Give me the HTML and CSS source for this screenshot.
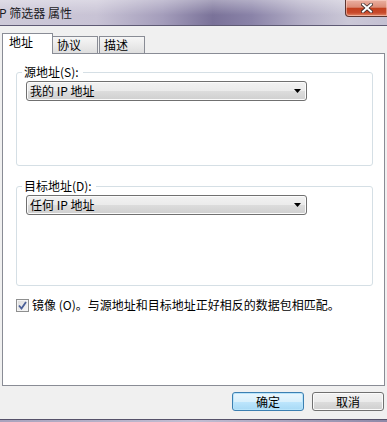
FILE: index.html
```html
<!DOCTYPE html>
<html lang="zh-CN">
<head>
    <meta charset="UTF-8">
    <meta name="viewport" content="width=device-width, initial-scale=1.0">
    <title>IP 筛选器 属性</title>
    <link rel="stylesheet" href="styles.css">
</head>
<body>
    <div class="window">
        <div class="titlebar">
            <div class="title">P 筛选器 属性</div>
            <div class="close">
                <svg width="12" height="10" viewBox="0 0 12 10">
                    <path d="M2 1.5 L10 8.5 M10 1.5 L2 8.5" stroke="#3a2a2a" stroke-width="3.6" stroke-linecap="square"/>
                    <path d="M2 1.5 L10 8.5 M10 1.5 L2 8.5" stroke="#ffffff" stroke-width="2" stroke-linecap="square"/>
                </svg>
            </div>
        </div>

        <div class="content">
            <div class="tabs">
                <div class="tab active">地址</div>
                <div class="tab">协议</div>
                <div class="tab">描述</div>
            </div>

            <div class="panel">
                <fieldset class="group">
                    <legend>源地址(S):</legend>
                    <div class="combo">
                        <span>我的 IP 地址</span>
                        <svg class="arrow" width="7" height="4" viewBox="0 0 7 4"><path d="M0 0 H7 L3.5 4 Z" fill="#000"/></svg>
                    </div>
                </fieldset>

                <fieldset class="group group-dest">
                    <legend>目标地址(D):</legend>
                    <div class="combo">
                        <span>任何 IP 地址</span>
                        <svg class="arrow" width="7" height="4" viewBox="0 0 7 4"><path d="M0 0 H7 L3.5 4 Z" fill="#000"/></svg>
                    </div>
                </fieldset>

                <label class="check">
                    <span class="box">
                        <svg width="9" height="9" viewBox="0 0 9 9"><path d="M1 4.5 L3.5 7.5 L8 1" fill="none" stroke="#4a5f97" stroke-width="1.8"/></svg>
                    </span>
                    镜像 (O)。与源地址和目标地址正好相反的数据包相匹配。
                </label>
            </div>

            <div class="buttons">
                <button class="btn default">确定</button>
                <button class="btn">取消</button>
            </div>
        </div>

        <div class="frame-bottom"></div>
    </div>
</body>
</html>
```

FILE: styles.css
```css
body {
    margin: 0;
    font-family: "Noto Sans CJK SC", "Liberation Sans", sans-serif;
    font-size: 12px;
    color: #000;
    background: #f0f0f0;
}

.window {
    width: 387px;
    height: 422px;
    display: flex;
    flex-direction: column;
    background: #f0f0f0;
    overflow: hidden;
}

/* Title bar */
.titlebar {
    height: 25px;
    flex-shrink: 0;
    display: flex;
    justify-content: space-between;
    align-items: flex-start;
    border-bottom: 1px solid #5e5a74;
    background:
        linear-gradient(180deg, rgba(255, 255, 255, 0.35), rgba(255, 255, 255, 0) 60%),
        linear-gradient(90deg, #cdc9d8 0%, #c8c3d5 25%, #a49dbb 42%, #7a7299 55%, #8a83a8 65%, #b3aec6 78%, #cbc8d7 90%, #c4c0d2 100%);
}

.title {
    padding-top: 6px;
    line-height: 14px;
    color: #1b1b24;
    margin-left: -1px;
}

.close {
    width: 41px;
    height: 16px;
    margin-right: -1px;
    display: flex;
    justify-content: center;
    align-items: center;
    border: 1px solid #5b3530;
    border-top: none;
    border-radius: 0 0 0 4px;
    background: linear-gradient(180deg, #eab0a2 0%, #dc8c77 45%, #c2401f 52%, #c84a2c 80%, #e48c6c 100%);
    box-shadow: inset 0 0 0 1px rgba(255, 220, 210, 0.5);
}

/* Tabs */
.content {
    padding: 7px 2px 0 2px;
    display: flex;
    flex-direction: column;
}

.tabs {
    height: 20px;
    display: flex;
    align-items: flex-end;
}

.tab {
    width: 46px;
    height: 17px;
    box-sizing: border-box;
    border: 1px solid #898c95;
    border-bottom: none;
    background: linear-gradient(180deg, #f6f6f6 0%, #ebebeb 50%, #dedede 100%);
    padding-left: 4px;
    line-height: 15px;
}

.tab + .tab {
    margin-left: -1px;
}

.tab:last-child {
    margin-left: 1px;
}

.tab.active {
    position: relative;
    z-index: 1;
    width: 51px;
    height: 21px;
    margin-bottom: -1px;
    background: #fff;
    padding-left: 6px;
    line-height: 16px;
}

.panel {
    width: 383px;
    height: 333px;
    box-sizing: border-box;
    border: 1px solid #898c95;
    background: #fff;
    padding: 11px 0 0 13px;
}

/* Group boxes */
.group {
    width: 357px;
    box-sizing: border-box;
    margin: 0;
    padding: 2px 9px 64px 9px;
    border: 1px solid #d5dfe5;
    border-radius: 3px;
}

.group legend {
    margin-left: -4px;
    padding: 0 4px 0 2px;
    line-height: 14px;
}

.group-dest {
    margin-top: 13px;
    padding-bottom: 70px;
}

.combo {
    width: 281px;
    height: 20px;
    box-sizing: border-box;
    display: flex;
    justify-content: space-between;
    align-items: center;
    padding: 0 5px 0 3px;
    border: 1px solid #707070;
    border-radius: 3px;
    background: linear-gradient(180deg, #f2f2f2 0%, #ebebeb 50%, #dddddd 50%, #cfcfcf 100%);
    box-shadow: inset 0 0 0 1px #fbfbfb;
    line-height: 16px;
}

/* Checkbox */
.check {
    margin-top: 12px;
    display: flex;
    align-items: center;
    gap: 3px;
    line-height: 14px;
}

.box {
    width: 13px;
    height: 13px;
    box-sizing: border-box;
    border: 1px solid #8e8f8f;
    background: linear-gradient(135deg, #dcdcdc 0%, #f6f6f6 100%);
    box-shadow: inset 0 0 0 1px #f4f4f4;
    display: flex;
    justify-content: center;
    align-items: center;
}

/* Buttons */
.buttons {
    margin-top: 6px;
    padding-right: 1px;
    display: flex;
    justify-content: flex-end;
    gap: 8px;
}

.btn {
    width: 72px;
    height: 19px;
    box-sizing: border-box;
    padding: 0;
    font-family: inherit;
    font-size: 12px;
    line-height: 15px;
    color: #000;
    border: 1px solid #707070;
    border-radius: 3px;
    background: linear-gradient(180deg, #f2f2f2 0%, #ebebeb 50%, #dddddd 50%, #cfcfcf 100%);
    box-shadow: inset 0 0 0 1px #fbfbfb;
}

.btn.default {
    border-color: #3c7fb1;
    background: linear-gradient(180deg, #eaf6fd 0%, #d9f0fc 50%, #bee6fd 50%, #a7d9f5 100%);
    box-shadow: inset 0 0 0 1px #b8e4fb;
}

.frame-bottom {
    margin-top: auto;
    height: 2px;
    border-top: 1px solid #56526a;
    background: linear-gradient(90deg, #a9a3bd, #c2bdd2 50%, #8f89a8);
}
```
